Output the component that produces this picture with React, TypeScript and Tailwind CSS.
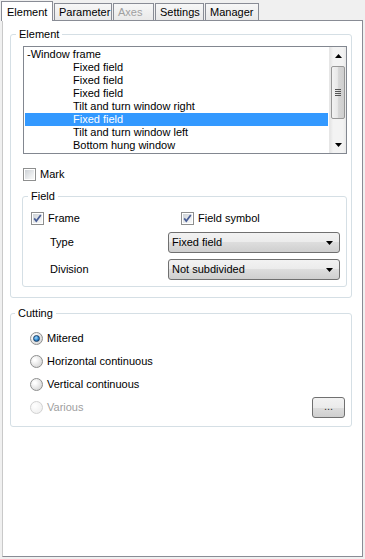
import React from "react";

const grad =
  "bg-[linear-gradient(to_bottom,#f2f2f2_0%,#ebebeb_50%,#dddddd_50%,#cfcfcf_100%)]";

function CheckBox({ checked }: { checked?: boolean }) {
  return (
    <span className="flex h-[13px] w-[13px] shrink-0 items-center justify-center border border-[#8e8f8f] bg-white">
      <span className="flex h-[9px] w-[9px] items-center justify-center bg-[linear-gradient(135deg,#cdd1d6_0%,#eef0f1_70%,#f8f8f8_100%)]">
        {checked && (
          <svg width="9" height="9" viewBox="0 0 9 9" className="overflow-visible">
            <path
              d="M1.2 4.4 L3.3 7 L7.8 0.9"
              fill="none"
              stroke="#4a5e96"
              strokeWidth="1.7"
            />
          </svg>
        )}
      </span>
    </span>
  );
}

function Radio({ checked, disabled }: { checked?: boolean; disabled?: boolean }) {
  return (
    <span
      className={
        "flex h-[13px] w-[13px] shrink-0 items-center justify-center rounded-full border " +
        (disabled
          ? "border-[#d2d2d2] bg-[radial-gradient(circle_at_35%_35%,#ffffff,#ececec)]"
          : "border-[#8e8f8f] bg-[radial-gradient(circle_at_35%_35%,#ffffff_10%,#d0d0d0_90%)]")
      }
    >
      {checked && (
        <span className="h-[7px] w-[7px] rounded-full border border-[#1a3f66] bg-[radial-gradient(circle_at_40%_35%,#a5dcff_0%,#2b86cf_55%,#0c4379_100%)]" />
      )}
    </span>
  );
}

function Combo({ value }: { value: string }) {
  return (
    <div
      className={
        "flex h-[21px] w-[172px] shrink-0 items-center justify-between rounded-[3px] border border-[#707070] pl-[3px] pr-[6px] " +
        grad
      }
    >
      <span>{value}</span>
      <svg width="7" height="4" viewBox="0 0 7 4">
        <path d="M0 0 H7 L3.5 4 Z" fill="#000" />
      </svg>
    </div>
  );
}

const items: { text: string; indent: boolean }[] = [
  { text: "-Window frame", indent: false },
  { text: "Fixed field", indent: true },
  { text: "Fixed field", indent: true },
  { text: "Fixed field", indent: true },
  { text: "Tilt and turn window right", indent: true },
  { text: "Fixed field", indent: true },
  { text: "Tilt and turn window left", indent: true },
  { text: "Bottom hung window", indent: true },
];

function Tab({ label, active, disabled, w }: { label: string; active?: boolean; disabled?: boolean; w: string }) {
  if (active) {
    return (
      <div
        className={
          "relative z-10 mb-[-1px] h-[20px] shrink-0 border border-b-0 border-[#898c95] bg-white pl-[5px] pt-[4px] leading-[13px] " +
          w
        }
      >
        {label}
      </div>
    );
  }
  return (
    <div
      className={
        "h-[17px] shrink-0 border border-b-0 border-[#898c95] bg-[linear-gradient(to_bottom,#f7f7f7,#e9e9e9)] pl-[4px] pt-[2px] leading-[13px] " +
        w +
        (disabled ? " text-[#a0a0a0]" : "")
      }
    >
      {label}
    </div>
  );
}

export default function App() {
  return (
    <div className="h-[559px] w-[365px] overflow-hidden bg-[#f0f0f0] font-['Liberation_Sans',Arial,sans-serif] text-[11px] leading-[13px] text-[#000]">
      {/* tabs */}
      <div className="relative z-10 flex h-[20px] items-end pl-[1px]">
        <Tab label="Element" active w="w-[52px]" />
        <Tab label="Parameter" w="w-[58px] ml-[1px]" />
        <Tab label="Axes" disabled w="w-[41px] ml-[1px]" />
        <Tab label="Settings" w="w-[49px] ml-[1px]" />
        <Tab label="Manager" w="w-[54px] ml-[1px]" />
      </div>

      {/* panel */}
      <div className="ml-[2px] h-[537px] w-[361px] border border-[#898c95] border-l-[#c9c9c9] bg-white pl-[7px] pr-[10px]">
        {/* Element group */}
        <fieldset className="mt-[7px] min-w-0 rounded-[3px] border border-[#d5dfe5]">
          <legend className="ml-[5px] px-[3px] leading-[13px]">Element</legend>
          <div className="pb-[10px] pl-[12px] pr-[4px] pt-[5px]">
            {/* list box */}
            <div className="flex h-[108px] border border-[#828790] bg-white">
              <div className="min-w-0 flex-1 px-[1px] pt-[1px]">
                {items.map((it, i) => (
                  <div
                    key={i}
                    className={
                      "h-[13px] whitespace-nowrap leading-[13px] " +
                      (it.indent ? "pl-[48px] " : "pl-[2px] ") +
                      (i === 5 ? "bg-[#3399ff] text-white" : "")
                    }
                  >
                    {it.text}
                  </div>
                ))}
              </div>
              {/* scrollbar */}
              <div className="flex w-[17px] shrink-0 flex-col border-l border-[#e6e6e6] bg-[linear-gradient(to_right,#e5e5e5,#f3f3f3_20%,#f3f3f3_80%,#e9e9e9)]">
                <div className="flex h-[17px] items-center justify-center">
                  <svg width="7" height="4" viewBox="0 0 7 4">
                    <path d="M3.5 0 L7 4 H0 Z" fill="#000" />
                  </svg>
                </div>
                <div className="mx-[1px] mt-[2px] flex h-[53px] items-center justify-center rounded-[2px] border border-[#979797] bg-[linear-gradient(to_right,#f3f3f3,#e8e8e8_45%,#d6d6d6_55%,#cfcfcf)]">
                  <svg width="6" height="7" viewBox="0 0 6 7">
                    <path d="M0 0.5 H6 M0 2.5 H6 M0 4.5 H6 M0 6.5 H6" stroke="#555" strokeWidth="1" />
                  </svg>
                </div>
                <div className="flex-1" />
                <div className="flex h-[17px] items-center justify-center">
                  <svg width="7" height="4" viewBox="0 0 7 4">
                    <path d="M0 0 H7 L3.5 4 Z" fill="#000" />
                  </svg>
                </div>
              </div>
            </div>

            {/* Mark */}
            <div className="mt-[14px] flex h-[13px] items-center gap-[4px]">
              <CheckBox />
              <span>Mark</span>
            </div>

            {/* Field group */}
            <fieldset className="-ml-[1px] mt-[9px] min-w-0 rounded-[3px] border border-[#d5dfe5]">
              <legend className="ml-[5px] px-[3px] leading-[13px]">Field</legend>
              <div className="pb-[6px] pl-[8px] pr-[5px] pt-[9px]">
                <div className="flex h-[13px] items-center">
                  <div className="flex w-[150px] items-center gap-[4px]">
                    <CheckBox checked />
                    <span>Frame</span>
                  </div>
                  <div className="flex items-center gap-[4px]">
                    <CheckBox checked />
                    <span>Field symbol</span>
                  </div>
                </div>
                <div className="mt-[7px] flex flex-col gap-[6px]">
                  <div className="flex items-center">
                    <span className="w-[137px] shrink-0 pl-[19px]">Type</span>
                    <Combo value="Fixed field" />
                  </div>
                  <div className="flex items-center">
                    <span className="w-[137px] shrink-0 pl-[19px]">Division</span>
                    <Combo value="Not subdivided" />
                  </div>
                </div>
              </div>
            </fieldset>
          </div>
        </fieldset>

        {/* Cutting group */}
        <fieldset className="mt-[9px] min-w-0 rounded-[3px] border border-[#d5dfe5]">
          <legend className="ml-[4px] px-[3px] leading-[13px]">Cutting</legend>
          <div className="pb-[7px] pl-[19px] pr-[6px] pt-[7px]">
            <div className="flex h-[23px] items-center gap-[4px]">
              <Radio checked />
              <span>Mitered</span>
            </div>
            <div className="flex h-[23px] items-center gap-[4px]">
              <Radio />
              <span>Horizontal continuous</span>
            </div>
            <div className="flex h-[23px] items-center gap-[4px]">
              <Radio />
              <span>Vertical continuous</span>
            </div>
            <div className="flex h-[23px] items-center">
              <div className="flex flex-1 items-center gap-[4px]">
                <Radio disabled />
                <span className="text-[#a0a0a0]">Various</span>
              </div>
              <div
                className={
                  "flex h-[21px] w-[33px] items-center justify-center rounded-[3px] border border-[#707070] pb-[3px] text-[#333] " +
                  grad
                }
              >
                ...
              </div>
            </div>
          </div>
        </fieldset>
      </div>
    </div>
  );
}
